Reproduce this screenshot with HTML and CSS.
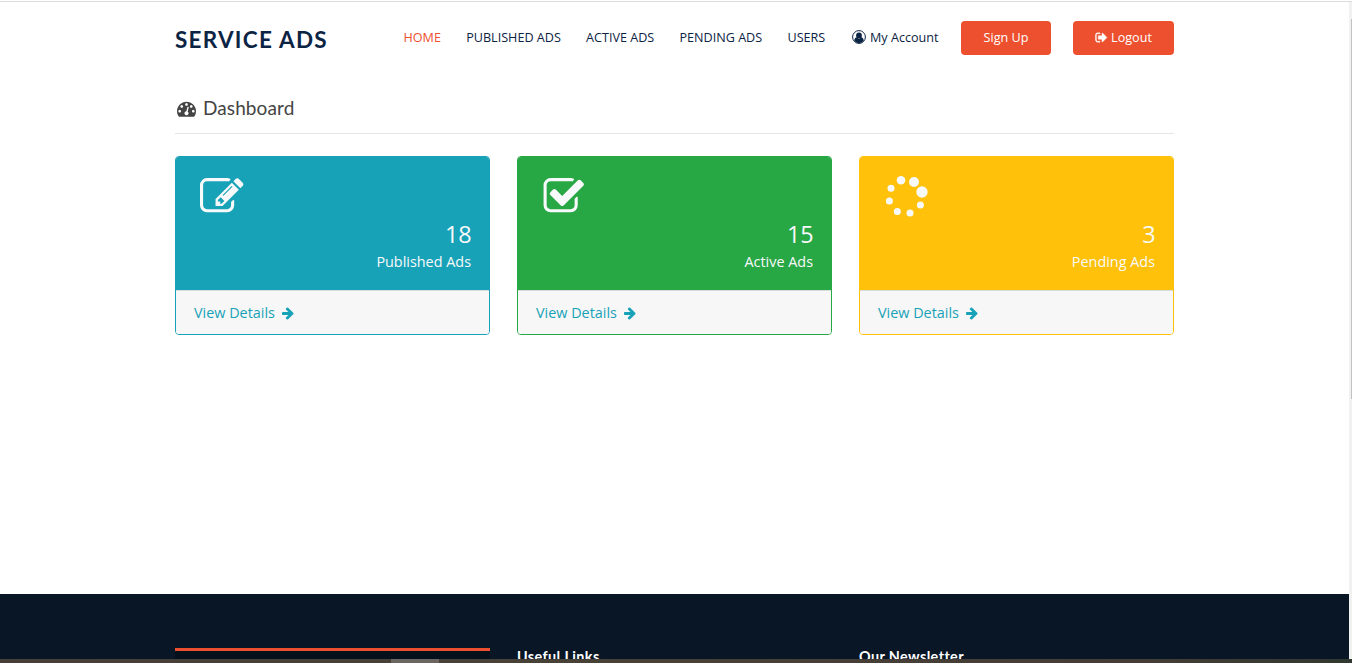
FILE: index.html
```html
<!DOCTYPE html>
<html lang="en">
<head>
<meta charset="utf-8">
<title>Service Ads</title>
<link rel="stylesheet" href="styles.css">
</head>
<body>
<div class="page">
  <header class="header container">
    <a class="logo">SERVICE ADS</a>
    <nav class="nav">
      <a class="active">HOME</a>
      <a>PUBLISHED ADS</a>
      <a>ACTIVE ADS</a>
      <a>PENDING ADS</a>
      <a>USERS</a>
      <a class="account"><svg class="icon-user" viewBox="0 0 14 14"><circle cx="7" cy="7" r="6.400" fill="none" stroke="currentColor" stroke-width="1"/><circle cx="7" cy="5.400" r="2.900" fill="currentColor"/><path fill="currentColor" d="M2.200 10.600C2.500 8.600 3.400 7.400 4.700 7.200Q7 9.600 9.300 7.200C10.600 7.400 11.500 8.600 11.800 10.600Q10 13.200 7 13.200T2.200 10.600z"/></svg>My Account</a>
    </nav>
    <a class="btn btn-signup">Sign Up</a>
    <a class="btn btn-logout"><svg class="icon-out" viewBox="0 0 1792 1792"><path fill="currentColor" stroke="currentColor" stroke-width="60" d="M704 1440q0 4 1 20t.5 26.500-3 23.500-10 19.500-20.500 6.500h-320q-119 0-203.500-84.500t-84.500-203.500v-704q0-119 84.500-203.500t203.500-84.500h320q13 0 22.500 9.500t9.500 22.500q0 4 1 20t.5 26.500-3 23.500-10 19.500-20.500 6.500h-320q-66 0-113 47t-47 113v704q0 66 47 113t113 47h312l11.500 1 11.500 3 8 5.500 7 9 2 13.500zm928-544q0 26-19 45l-544 544q-19 19-45 19t-45-19-19-45v-288h-448q-26 0-45-19t-19-45v-384q0-26 19-45t45-19h448v-288q0-26 19-45t45-19 45 19l544 544q19 19 19 45z"/></svg>Logout</a>
  </header>

  <main class="main container">
    <h1 class="title"><svg class="icon-dash" viewBox="0 0 1792 1792"><path fill="currentColor" d="M384 1152q0-53-37.500-90.500t-90.500-37.500-90.500 37.500-37.500 90.500 37.500 90.500 90.500 37.500 90.500-37.500 37.500-90.500zm192-448q0-53-37.500-90.500t-90.500-37.500-90.500 37.500-37.500 90.500 37.500 90.500 90.500 37.500 90.500-37.500 37.500-90.500zm428 481l101-382q6-26-7.500-48.500t-38.500-29.500-48 6.500-30 39.500l-101 382q-60 5-107 43.500t-63 98.500q-20 77 20 146t117 89 146-20 89-117q16-60-6-117t-72-91zm660-33q0-53-37.500-90.500t-90.500-37.500-90.500 37.500-37.500 90.500 37.500 90.500 90.500 37.500 90.500-37.500 37.500-90.500zm-640-640q0-53-37.500-90.500t-90.500-37.500-90.500 37.500-37.500 90.500 37.500 90.500 90.500 37.500 90.500-37.500 37.500-90.500zm448 192q0-53-37.500-90.500t-90.500-37.500-90.500 37.500-37.500 90.500 37.500 90.500 90.500 37.500 90.500-37.500 37.500-90.500zm320 448q0 261-141 483-19 29-54 29h-1402q-35 0-54-29-141-221-141-483 0-182 71-348t191-286 286-191 348-71 348 71 286 191 191 286 71 348z"/></svg><span>Dashboard</span></h1>

    <div class="cards">
      <section class="card info">
        <div class="card-top">
          <svg class="card-icon" viewBox="0 0 1792 1792"><path fill="currentColor" d="M888 1184l116-116-152-152-116 116v56h96v96h56zm440-720q-16-16-33 1l-350 350q-17 17-1 33t33-1l350-350q17-17 1-33zm80 594v190q0 119-84.500 203.500t-203.500 84.500h-832q-119 0-203.500-84.500t-84.500-203.500v-832q0-119 84.500-203.500t203.500-84.500h832q63 0 117 25 15 7 18 23 3 17-9 29l-49 49q-14 14-32 8-23-6-45-6h-832q-66 0-113 47t-47 113v832q0 66 47 113t113 47h832q66 0 113-47t47-113v-126q0-13 9-22l64-64q15-15 35-7t20 29zm-96-738l288 288-672 672h-288v-288zm444 132l-92 92-288-288 92-92q28-28 68-28t68 28l152 152q28 28 28 68t-28 68z"/></svg>
          <div class="count">18</div>
          <div class="label">Published Ads</div>
        </div>
        <a class="card-foot">View Details<svg class="icon-arrow" viewBox="0 0 1792 1792"><path fill="currentColor" d="M1600 960q0 54-37 91l-651 651q-39 37-91 37-51 0-90-37l-75-75q-38-38-38-91t38-91l293-293h-704q-52 0-84.500-37.500t-32.500-90.500v-128q0-53 32.500-90.500t84.500-37.500h704l-293-294q-38-36-38-90t38-90l75-75q38-38 90-38 53 0 91 38l651 651q37 35 37 90z"/></svg></a>
      </section>
      <section class="card success">
        <div class="card-top">
          <svg class="card-icon" viewBox="0 0 1792 1792"><path fill="currentColor" d="M1472 930v318q0 119-84.500 203.500t-203.500 84.500h-832q-119 0-203.500-84.500t-84.500-203.500v-832q0-119 84.500-203.500t203.500-84.500h832q63 0 117 25 15 7 18 23 3 17-9 29l-49 49q-10 10-23 10-3 0-9-2-23-6-45-6h-832q-66 0-113 47t-47 113v832q0 66 47 113t113 47h832q66 0 113-47t47-113v-254q0-13 9-22l64-64q10-10 23-10 6 0 12 3 20 8 20 29zm231-489l-814 814q-24 24-57 24t-57-24l-430-430q-24-24-24-57t24-57l110-110q24-24 57-24t57 24l263 263 647-647q24-24 57-24t57 24l110 110q24 24 24 57t-24 57z"/></svg>
          <div class="count">15</div>
          <div class="label">Active Ads</div>
        </div>
        <a class="card-foot">View Details<svg class="icon-arrow" viewBox="0 0 1792 1792"><path fill="currentColor" d="M1600 960q0 54-37 91l-651 651q-39 37-91 37-51 0-90-37l-75-75q-38-38-38-91t38-91l293-293h-704q-52 0-84.500-37.500t-32.500-90.500v-128q0-53 32.500-90.500t84.500-37.500h704l-293-294q-38-36-38-90t38-90l75-75q38-38 90-38 53 0 91 38l651 651q37 35 37 90z"/></svg></a>
      </section>
      <section class="card warning">
        <div class="card-top">
          <svg class="card-icon spinner" viewBox="0 0 44 44"><g fill="currentColor"><circle cx="38" cy="17" r="5.700"/><circle cx="30" cy="7" r="5"/><circle cx="17" cy="5.200" r="4.300"/><circle cx="7" cy="13.200" r="3.500"/><circle cx="5.400" cy="26" r="3.500"/><circle cx="13.300" cy="36.400" r="3.500"/><circle cx="26" cy="38" r="3.500"/><circle cx="36.400" cy="30" r="3.500"/></g></svg>
          <div class="count">3</div>
          <div class="label">Pending Ads</div>
        </div>
        <a class="card-foot">View Details<svg class="icon-arrow" viewBox="0 0 1792 1792"><path fill="currentColor" d="M1600 960q0 54-37 91l-651 651q-39 37-91 37-51 0-90-37l-75-75q-38-38-38-91t38-91l293-293h-704q-52 0-84.500-37.500t-32.500-90.500v-128q0-53 32.500-90.500t84.500-37.500h704l-293-294q-38-36-38-90t38-90l75-75q38-38 90-38 53 0 91 38l651 651q37 35 37 90z"/></svg></a>
      </section>
    </div>
  </main>

  <footer class="footer">
    <div class="footer-grid container">
      <div class="footer-info"></div>
      <h4>Useful Links</h4>
      <h4>Our Newsletter</h4>
    </div>
  </footer>
</div>
<div class="scrollbar"><div class="thumb"></div></div>
<div class="taskbar"><div class="task"></div></div>
</body>
</html>
```
FILE: styles.css
```css
* { box-sizing: border-box; }
body {
  margin: 0;
  width: 1352px;
  height: 663px;
  overflow: hidden;
  position: relative;
  background: #fff;
  color: #444;
  font-family: "Open Sans", sans-serif;
  font-size: 14.4px;
}
svg { display: block; flex: none; }
.page {
  height: 663px;
  display: flex;
  flex-direction: column;
  overflow: hidden;
  padding-top: 1px;
}
.page::before { content: ""; flex: none; height: 1px; background: #dcdcdc; }
.container { width: 999px; margin-left: 175px; }
.header {
  flex: none;
  height: 72px;
  display: flex;
  align-items: center;
}
.logo {
  width: 228.500px;
  padding-top: 2px;
  font-family: Lato, sans-serif;
  font-weight: 700;
  font-size: 22.500px;
  letter-spacing: 1.250px;
  color: #0c2444;
  white-space: nowrap;
}
.nav {
  display: flex;
  gap: 25.300px;
  padding-bottom: 2px;
  font-size: 12.600px;
  color: #0c2444;
  white-space: nowrap;
}
.nav .active { color: #ed502e; }
.account { display: flex; align-items: center; font-size: 12.600px; }
.icon-user { width: 14px; height: 14px; margin: 0 4.500px 0 1px; }
.btn {
  height: 34px;
  display: flex;
  align-items: center;
  justify-content: center;
  padding-bottom: 2px;
  border-radius: 4px;
  background: #ed502e;
  color: #fff;
  font-size: 12.600px;
  white-space: nowrap;
}
.btn-signup { width: 90px; margin-left: auto; }
.btn-logout { width: 101px; margin-left: 22px; }
.icon-out { width: 13px; height: 13px; margin-right: 3px; }

.main { flex: none; height: 520px; }
.title {
  margin: 0;
  height: 60px;
  display: flex;
  align-items: center;
  padding: 9px 0 0 2px;
  border-bottom: 1px solid #e5e5e5;
  font-family: Lato, sans-serif;
  font-size: 19px;
  letter-spacing: 0.100px;
  font-weight: 400;
  color: #444;
}
.title span { padding-bottom: 1px; }
.icon-dash { width: 19px; height: 19px; margin-right: 7px; }
.cards {
  display: grid;
  grid-template-columns: repeat(3, 315px);
  gap: 27px;
  padding-top: 22px;
}
.card {
  height: 179px;
  border: 1px solid var(--c);
  border-radius: 4px;
  overflow: hidden;
}
.info { --c: #18a2b8; }
.success { --c: #28a745; }
.warning { --c: #ffc109; }
.card-top {
  height: 133px;
  padding: 18px 18px 0 24px;
  background: var(--c);
  color: #f8f9fa;
  text-align: right;
}
.card-icon { width: 43.500px; height: 43.500px; }
.spinner { width: 44px; height: 44px; margin-bottom: -0.500px; }
.count { margin-right: -0.700px; font-size: 23.400px; line-height: 31px; }
.label { padding-top: 1px; font-size: 14.400px; line-height: 22px; }
.card-foot {
  height: 44px;
  display: flex;
  align-items: center;
  padding-left: 18px;
  border-top: 1px solid #d9dcdc;
  background: #f7f7f7;
  color: #18a2b8;
}
.icon-arrow { width: 14px; height: 14px; margin-left: 6px; }

.footer { flex: 1; background: #081626; }
.footer-grid {
  display: grid;
  grid-template-columns: repeat(3, 315px);
  gap: 27px;
  padding-top: 54px;
}
.footer-info { height: 60px; border-top: 3px solid #ed502e; background: #04101c; }
.footer h4 {
  margin: 0;
  font-family: Lato, sans-serif;
  font-size: 14.400px;
  letter-spacing: 0.400px;
  line-height: 18px;
  font-weight: 700;
  color: #fff;
}

/* window chrome over the page */
.scrollbar {
  position: absolute;
  right: 0;
  top: 2px;
  width: 3px;
  height: 661px;
  padding-top: 17px;
  background: #f1f1f1;
}
.thumb { height: 380px; margin-left: 2px; background: #c1c1c1; }
.taskbar {
  position: absolute;
  left: 0;
  bottom: 0;
  width: 1352px;
  height: 4px;
  padding-left: 391px;
  background: linear-gradient(90deg, #453f38, #474137 40%, #443d37 85%, #303830);
}
.task { width: 48px; height: 4px; background: #6b6661; }
```
